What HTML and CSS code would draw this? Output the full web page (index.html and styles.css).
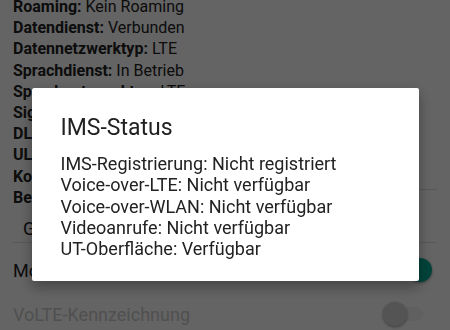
FILE: index.html
```html
<!DOCTYPE html>
<html lang="de">
<head>
    <meta charset="UTF-8">
    <meta name="viewport" content="width=device-width, initial-scale=1.0">
    <title>Telefoninformationen</title>
    <link rel="stylesheet" href="styles.css">
</head>
<body>

    <div class="info">
        <div class="row"><b>Roaming:</b> Kein Roaming</div>
        <div class="row"><b>Datendienst:</b> Verbunden</div>
        <div class="row"><b>Datennetzwerktyp:</b> LTE</div>
        <div class="row"><b>Sprachdienst:</b> In Betrieb</div>
        <div class="row"><b>Sprachnetzwerktyp:</b> LTE</div>
        <div class="row"><b>Signalstärke:</b> -97 dBm 43 asu</div>
        <div class="row"><b>DL-Bandbreite (kbit/s):</b> 15000</div>
        <div class="row"><b>UL-Bandbreite (kbit/s):</b> 15000</div>
        <div class="row field"><b>Konfiguration des physischen Kanals:</b><span class="value"></span></div>
        <div class="row"><b>Bevorzugten Netzwerktyp festlegen:</b></div>
        <div class="spinner">GSM/WCDMA/LTE (PRL)</div>
        <div class="toggle-row first">
            <span>Mobilfunkverbindung</span>
            <span class="switch on"><span class="track"></span><span class="thumb"></span></span>
        </div>
        <div class="toggle-row disabled">
            <span>VoLTE-Kennzeichnung</span>
            <span class="switch off"><span class="track"></span><span class="thumb"></span></span>
        </div>
    </div>

    <div class="scrim">
        <div class="dialog">
            <h2>IMS-Status</h2>
            <p>
                IMS-Registrierung: Nicht registriert<br>
                Voice-over-LTE: Nicht verfügbar<br>
                Voice-over-WLAN: Nicht verfügbar<br>
                Videoanrufe: Nicht verfügbar<br>
                UT-Oberfläche: Verfügbar
            </p>
        </div>
    </div>

</body>
</html>
```

FILE: styles.css
```css
body {
    margin: 0;
    height: 330px;
    overflow: hidden;
    font-family: Roboto, "Noto Sans", sans-serif;
    background-color: #fafafa;
    color: #212121;
}
.info {
    margin-top: -4px;
    padding: 0 13px;
}
.row {
    font-size: 16px;
    line-height: 21.2px;
    white-space: nowrap;
}
.row b {
    font-weight: 700;
}
.row.field {
    display: flex;
}
.row.field .value {
    flex: 1;
    margin: 0 0 -3px 8px;
    border-bottom: 1px solid #dcdcdc;
}
.spinner {
    margin: 10px 0 0 -1px;
    padding: 0 0 3px 11px;
    font-size: 18px;
    line-height: 21px;
    border-bottom: 1px solid #dedede;
}
.toggle-row {
    display: flex;
    align-items: center;
    justify-content: space-between;
    height: 44px;
    font-size: 18px;
}
.toggle-row.first {
    margin-top: 5px;
}
.toggle-row.disabled {
    color: #c8c8c8;
}
.switch {
    position: relative;
    width: 38px;
    height: 26px;
}
.switch.on {
    margin-right: 7px;
}
.switch.off {
    margin-right: 14px;
}
.track {
    position: absolute;
    left: 0;
    right: 0;
    top: 6px;
    height: 14px;
    border-radius: 7px;
}
.thumb {
    position: absolute;
    top: 1px;
    width: 24px;
    height: 24px;
    border-radius: 50%;
    box-shadow: 0 1px 3px rgba(0, 0, 0, 0.4);
}
.on .track {
    background-color: #7fd6ca;
}
.on .thumb {
    right: -2px;
    background-color: #00a892;
}
.off .track {
    background-color: #f0f0f0;
}
.off .thumb {
    left: -2px;
    background-color: #d2d2d2;
}
.scrim {
    position: fixed;
    top: 0;
    left: 0;
    right: 0;
    bottom: 0;
    display: flex;
    justify-content: center;
    align-items: flex-start;
    padding-top: 88px;
    background-color: rgba(0, 0, 0, 0.6);
}
.dialog {
    width: 387px;
    height: 193px;
    box-sizing: border-box;
    padding: 26px 24px 22px 29px;
    background-color: #fff;
    border-radius: 2px;
    box-shadow: 0 6px 14px rgba(0, 0, 0, 0.35);
}
.dialog h2 {
    margin: 0;
    font-size: 23px;
    line-height: 28px;
    font-weight: 400;
    color: #212121;
}
.dialog p {
    margin: 11px 0 0;
    font-size: 18px;
    line-height: 21.25px;
    color: #222;
}
```
